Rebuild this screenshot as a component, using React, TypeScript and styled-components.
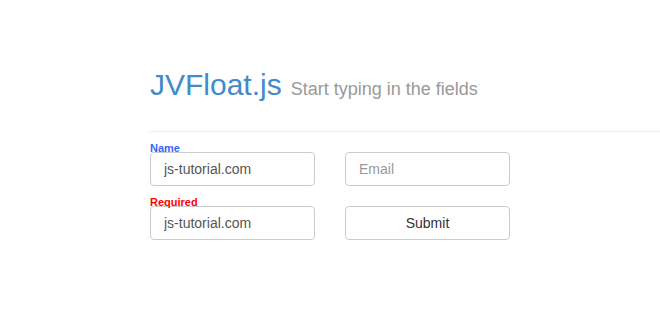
import styled, { createGlobalStyle } from "styled-components";

const GlobalStyle = createGlobalStyle`
  html, body {
    margin: 0;
    padding: 0;
    background: #fff;
    font-family: "Liberation Sans", Arial, sans-serif;
  }
`;

const App = () => {
  return (
    <>
      <GlobalStyle />
      <Page>
        <Header>
          <Title>JVFloat.js</Title>
          <Subtitle>Start typing in the fields</Subtitle>
        </Header>
        <Divider />
        <Form>
          <Field>
            <FloatLabel color="#3366ff">Name</FloatLabel>
            <Input defaultValue="js-tutorial.com" />
          </Field>
          <Field>
            <Input placeholder="Email" />
          </Field>
          <Field>
            <FloatLabel color="#ff0000">Required</FloatLabel>
            <Input defaultValue="js-tutorial.com" />
          </Field>
          <Field>
            <SubmitBtn>Submit</SubmitBtn>
          </Field>
        </Form>
      </Page>
    </>
  );
};

export default App;

const Page = styled.div`
  padding: 65px 0 0 150px;
`;

const Header = styled.div`
  display: flex;
  align-items: baseline;
  gap: 9px;
`;

const Title = styled.h1`
  margin: 0;
  font-size: 30px;
  font-weight: normal;
  line-height: 40px;
  color: #428bca;
`;

const Subtitle = styled.span`
  font-size: 18px;
  color: #999;
`;

const Divider = styled.hr`
  margin: 26px 0 0 0;
  border: none;
  border-top: 1px solid #eee;
`;

const Form = styled.div`
  display: grid;
  grid-template-columns: 165px 165px;
  column-gap: 30px;
  row-gap: 20px;
  padding-top: 20px;
`;

const Field = styled.div`
  position: relative;
`;

const FloatLabel = styled.label<{ color: string }>`
  position: absolute;
  top: -10px;
  left: 0;
  font-size: 11px;
  font-weight: bold;
  line-height: 12px;
  color: ${(p) => p.color};
`;

const Input = styled.input`
  box-sizing: border-box;
  width: 165px;
  height: 34px;
  padding: 0 13px;
  font-family: "Liberation Sans", Arial, sans-serif;
  font-size: 14px;
  color: #555;
  background: #fff;
  border: 1px solid #ccc;
  border-radius: 4px;
  outline: none;
  &::placeholder {
    color: #999;
  }
`;

const SubmitBtn = styled.button`
  box-sizing: border-box;
  width: 165px;
  height: 34px;
  font-family: "Liberation Sans", Arial, sans-serif;
  font-size: 14px;
  color: #333;
  background: #fff;
  border: 1px solid #ccc;
  border-radius: 4px;
  cursor: pointer;
`;
